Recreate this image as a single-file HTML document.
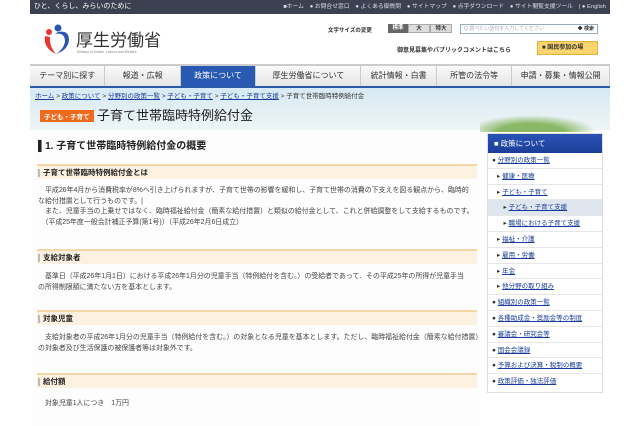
<!DOCTYPE html>
<html><head><meta charset="utf-8"><style>
*{margin:0;padding:0;box-sizing:border-box}
body{width:640px;height:426px;background:#fff;font-family:"Liberation Sans","Noto Sans CJK JP",sans-serif;overflow:hidden;position:relative;color:#333}
.abs{position:absolute}
a{color:#1a3d9c;text-decoration:underline}
.top{left:30px;top:0;width:580px;height:14px;background:#3b4150;color:#fff;font-size:7px;line-height:14px;white-space:nowrap}
.top .r{position:absolute;right:4px;top:0;font-size:5.8px;color:#dde}
.nav{left:30px;top:64px;width:580px;height:24px;background:linear-gradient(#fafafa,#e6e6e6);border-top:2px solid #ccc;border-bottom:2px solid #2a5aa8;display:flex;font-size:8px}
.nav div{flex:1;text-align:center;line-height:20px;border-right:1px solid #ccc;color:#333}
.nav .on{background:#2859b3;color:#fff}
.crumb{left:30px;top:88px;width:580px;height:42px;background:linear-gradient(#d7e9f3,#eef5f6);font-size:6.5px;white-space:nowrap}
.main{left:33px;top:130px;width:446px;height:296px;background:#fdfdfd}
.h1{left:38px;top:137px;font-size:10px;font-weight:bold;color:#222}
.hbox{position:absolute;left:37px;width:440px;height:15px;background:#fdf1e2;border-top:2px solid #f5d6a6;font-size:7.5px;font-weight:bold;line-height:13px;padding-left:6px;color:#222}
.hbox:before{content:"";position:absolute;left:1px;top:3px;width:2px;height:8px;background:#bbb}
.t{position:absolute;left:38px;font-size:6.95px;line-height:10.5px;color:#444;white-space:nowrap}
.side{left:487px;top:133px;width:116px;height:260px;border:1px solid #ddd;background:#fff}
.sh{height:19px;background:linear-gradient(#2a52b5,#1c3f99);color:#fff;font-size:7.5px;line-height:19px;padding-left:6px}
.si{height:15.8px;border-bottom:1px solid #e6e6e6;font-size:6.5px;line-height:15px;padding-left:4px;white-space:nowrap}
.si.s{padding-left:9px}
.si.hl{background:#dfe6ee}
</style></head><body>
<div class="abs top">&nbsp;&nbsp;ひと、くらし、みらいのために<span class="r">■ホーム　● お問合せ窓口　● よくある御質問　● サイトマップ　● 点字ダウンロード　● サイト閲覧支援ツール　| ● English</span></div>
<svg class="abs" style="left:41px;top:24px" width="32" height="32" viewBox="0 0 32 32"><circle cx="8" cy="8" r="3" fill="#e33"/><circle cx="17" cy="4" r="3.5" fill="#2a55b3"/><path d="M4 12 Q2 24 15 30 Q8 22 9 13Z" fill="#e33"/><path d="M14 10 Q24 8 24 18 Q22 26 15 30 Q27 26 28 16 Q28 6 17 8Z" fill="#2a55b3"/></svg>
<div class="abs" style="left:76px;top:26px;font-size:17px;color:#333">厚生労働省</div>
<div class="abs" style="left:77px;top:50px;font-size:3.5px;color:#888">Ministry of Health, Labour and Welfare</div>
<div class="abs" style="left:328px;top:26px;font-size:5.5px;font-weight:bold">文字サイズの変更</div>
<div class="abs" style="left:388px;top:24px;width:64px;height:9px;display:flex;font-size:5.5px;font-weight:bold;line-height:9px;text-align:center"><div style="flex:1;background:#666;color:#fff">標準</div><div style="flex:1;background:#ddd;border:1px solid #aaa">大</div><div style="flex:1;background:#ddd;border:1px solid #aaa">特大</div></div>
<div class="abs" style="left:460px;top:24px;width:138px;height:10px;border:1px solid #9ab;background:#fff;font-size:5px;color:#aab;line-height:8px;padding-left:3px">Q 調べたい語句を入力してください <b style="position:absolute;right:3px;color:#333">◆ 検索</b></div>
<div class="abs" style="left:397px;top:45px;font-size:6px;font-weight:bold">御意見募集やパブリックコメントはこちら</div>
<div class="abs" style="left:537px;top:41px;width:61px;height:14px;background:#fbd56e;border:1px solid #e4b03e;font-size:6px;font-weight:bold;line-height:12px;padding-left:4px">■ 国民参加の場</div>
<div class="abs nav"><div>テーマ別に探す</div><div>報道・広報</div><div class="on">政策について</div><div style="flex:1.4">厚生労働省について</div><div>統計情報・白書</div><div>所管の法令等</div><div style="flex:1.3">申請・募集・情報公開</div></div>
<div class="abs crumb"><div style="padding:2px 0 0 5px"><a>ホーム</a> &gt; <a>政策について</a> &gt; <a>分野別の政策一覧</a> &gt; <a>子ども・子育て</a> &gt; <a>子ども・子育て支援</a> &gt; 子育て世帯臨時特例給付金</div></div>
<div class="abs" style="left:40px;top:110px;background:#ef6a1a;color:#fff;font-size:6.5px;font-weight:bold;padding:1px 4px">子ども・子育て</div>
<div class="abs" style="left:97px;top:105px;font-size:13px;color:#222">子育て世帯臨時特例給付金</div>
<div class="abs" style="left:480px;top:112px;width:128px;height:20px;background:radial-gradient(ellipse at 40% 100%,#8ab866 30%,transparent 60%)"></div>
<div class="abs main"></div>
<div class="abs h1">▌1. 子育て世帯臨時特例給付金の概要</div>
<div class="hbox" style="top:164px">子育て世帯臨時特例給付金とは</div>
<div class="t" style="top:186px">　平成26年4月から消費税率が8%へ引き上げられますが、子育て世帯の影響を緩和し、子育て世帯の消費の下支えを図る観点から、臨時的<br>な給付措置として行うものです。|<br>　また、児童手当の上乗せではなく、臨時福祉給付金（簡素な給付措置）と類似の給付金として、これと併給調整をして支給するものです。<br>　（平成25年度一般会計補正予算(第1号)）（平成26年2月6日成立）</div>
<div class="hbox" style="top:249px">支給対象者</div>
<div class="t" style="top:272px">　基準日（平成26年1月1日）における平成26年1月分の児童手当（特例給付を含む。）の受給者であって、その平成25年の所得が児童手当<br>の所得制限額に満たない方を基本とします。</div>
<div class="hbox" style="top:310px">対象児童</div>
<div class="t" style="top:333px">　支給対象者の平成26年1月分の児童手当（特例給付を含む。）の対象となる児童を基本とします。ただし、臨時福祉給付金（簡素な給付措置）<br>の対象者及び生活保護の被保護者等は対象外です。</div>
<div class="hbox" style="top:373px">給付額</div>
<div class="t" style="top:399px">　対象児童1人につき　1万円</div>
<div class="abs side">
<div class="sh">■ 政策について</div>
<div class="si">● <a>分野別の政策一覧</a></div>
<div class="si s">▸ <a>健康・医療</a></div>
<div class="si s">▸ <a>子ども・子育て</a></div>
<div class="si s hl">　▸ <a>子ども・子育て支援</a></div>
<div class="si s">　▸ <a>職場における子育て支援</a></div>
<div class="si s">▸ <a>福祉・介護</a></div>
<div class="si s">▸ <a>雇用・労働</a></div>
<div class="si s">▸ <a>年金</a></div>
<div class="si s">▸ <a>他分野の取り組み</a></div>
<div class="si">● <a>組織別の政策一覧</a></div>
<div class="si">● <a>各種助成金・奨励金等の制度</a></div>
<div class="si">● <a>審議会・研究会等</a></div>
<div class="si">● <a>国会会議録</a></div>
<div class="si">● <a>予算および決算・税制の概要</a></div>
<div class="si" style="border:0">● <a>政策評価・独法評価</a></div>
</div>
</body></html>
